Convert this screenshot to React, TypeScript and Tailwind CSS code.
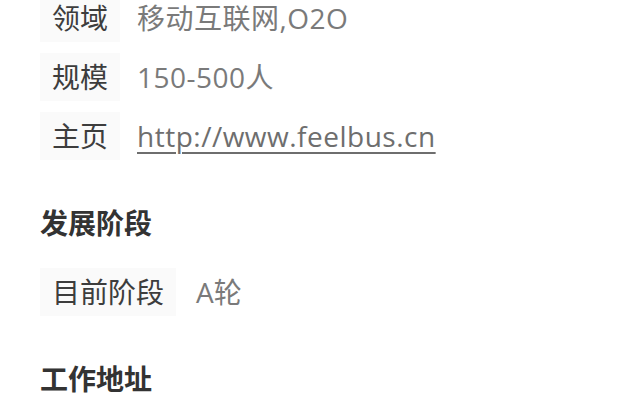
const font = {
  fontFamily: '"Open Sans", "Noto Sans CJK SC", sans-serif',
};

function InfoRow({ label, value, link }: { label: string; value: string; link?: boolean }) {
  return (
    <div className="flex items-center h-[48px]">
      <div className="h-full flex items-center px-[12px] bg-[#fafafa] text-[#3d3d3d]">{label}</div>
      <div className="pl-[17px] text-[#7a7a7a] tracking-[0.5px]">
        {link ? (
          <a href="#" className="underline underline-offset-[5px] decoration-[1.5px] text-[#6e6e6e]">
            {value}
          </a>
        ) : (
          value
        )}
      </div>
    </div>
  );
}

export default function App() {
  return (
    <div className="w-[640px] h-[400px] overflow-hidden bg-white" style={font}>
      <div className="pl-[40px] -mt-[6px] text-[28px] leading-none">
        <div className="flex flex-col gap-[11px]">
          <InfoRow label="领域" value="移动互联网,O2O" />
          <InfoRow label="规模" value="150-500人" />
          <InfoRow label="主页" value="http://www.feelbus.cn" link />
        </div>

        <div className="mt-[43px] h-[40px] flex items-center font-bold text-[#333]">发展阶段</div>

        <div className="mt-[25px] flex flex-col">
          <div className="flex items-center h-[48px]">
            <div className="h-full flex items-center px-[12px] bg-[#fafafa] text-[#3d3d3d]">目前阶段</div>
            <div className="pl-[20px] text-[#7a7a7a]">A轮</div>
          </div>
        </div>

        <div className="mt-[43px] h-[40px] flex items-center font-bold text-[#333]">工作地址</div>
      </div>
    </div>
  );
}
